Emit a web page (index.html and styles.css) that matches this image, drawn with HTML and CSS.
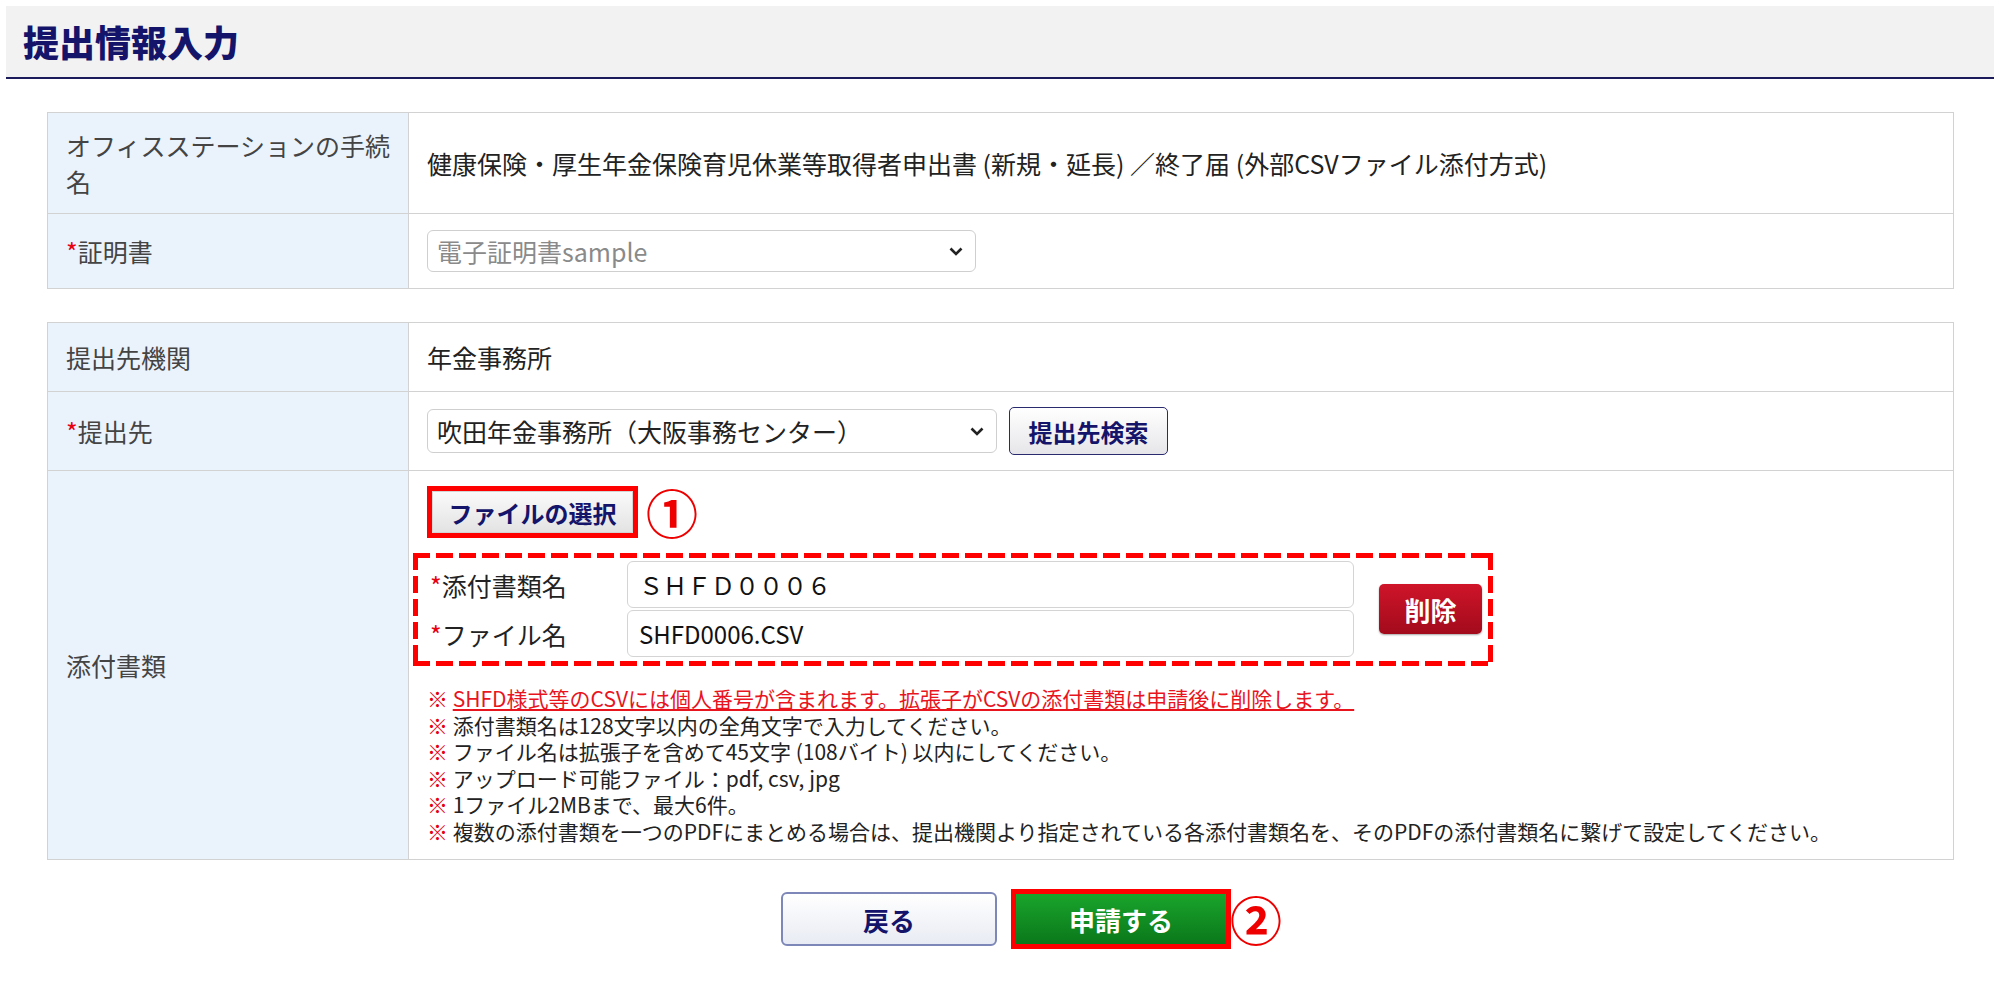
FILE: index.html
```html
<!DOCTYPE html>
<html lang="ja">
<head>
    <meta charset="UTF-8">
    <title>提出情報入力</title>
    <link rel="stylesheet" href="styles.css">
</head>
<body>
    <div class="page">
        <div class="page-head">
            <h1>提出情報入力</h1>
        </div>

        <table class="form-table">
            <colgroup><col class="col-label"><col></colgroup>
            <tr class="row-proc">
                <th>オフィスステーションの手続名</th>
                <td>健康保険・厚生年金保険育児休業等取得者申出書 (新規・延長) ／終了届 (外部CSVファイル添付方式)</td>
            </tr>
            <tr class="row-cert">
                <th><span class="req">*</span>証明書</th>
                <td>
                    <div class="select select-cert is-disabled">
                        <span>電子証明書sample</span>
                        <svg width="14" height="9" viewBox="0 0 14 9"><path d="M1.5 1.5 L7 7 L12.5 1.5" fill="none" stroke="#222" stroke-width="2.6"/></svg>
                    </div>
                </td>
            </tr>
        </table>

        <table class="form-table">
            <colgroup><col class="col-label"><col></colgroup>
            <tr class="row-org">
                <th>提出先機関</th>
                <td>年金事務所</td>
            </tr>
            <tr class="row-dest">
                <th><span class="req">*</span>提出先</th>
                <td>
                    <div class="dest-line">
                        <div class="select select-dest">
                            <span>吹田年金事務所（大阪事務センター）</span>
                            <svg width="14" height="9" viewBox="0 0 14 9"><path d="M1.5 1.5 L7 7 L12.5 1.5" fill="none" stroke="#222" stroke-width="2.6"/></svg>
                        </div>
                        <button class="btn-search">提出先検索</button>
                    </div>
                </td>
            </tr>
            <tr class="row-attach">
                <th>添付書類</th>
                <td>
                    <div class="file-line">
                        <span class="mark-box"><button class="btn-file">ファイルの選択</button></span>
                        <span class="step">①</span>
                    </div>

                    <div class="dash-box">
                        <div class="fields">
                            <div class="field">
                                <label><span class="req">*</span>添付書類名</label>
                                <div class="text-input">ＳＨＦＤ０００６</div>
                            </div>
                            <div class="field">
                                <label><span class="req">*</span>ファイル名</label>
                                <div class="text-input">SHFD0006.CSV</div>
                            </div>
                        </div>
                        <button class="btn-delete">削除</button>
                    </div>

                    <ul class="notes">
                        <li class="warn"><span class="kome">※</span> <u>SHFD様式等のCSVには個人番号が含まれます。拡張子がCSVの添付書類は申請後に削除します。</u></li>
                        <li><span class="kome">※</span> 添付書類名は128文字以内の全角文字で入力してください。</li>
                        <li><span class="kome">※</span> ファイル名は拡張子を含めて45文字 (108バイト) 以内にしてください。</li>
                        <li><span class="kome">※</span> アップロード可能ファイル：pdf, csv, jpg</li>
                        <li><span class="kome">※</span> 1ファイル2MBまで、最大6件。</li>
                        <li><span class="kome">※</span> 複数の添付書類を一つのPDFにまとめる場合は、提出機関より指定されている各添付書類名を、そのPDFの添付書類名に繋げて設定してください。</li>
                    </ul>
                </td>
            </tr>
        </table>

        <div class="actions">
            <button class="btn-back">戻る</button>
            <span class="mark-box mark-apply">
                <button class="btn-apply">申請する</button>
                <span class="step step-apply">②</span>
            </span>
        </div>
    </div>
</body>
</html>
```

FILE: styles.css
```css
body {
    margin: 0;
    background-color: #fff;
    color: #333;
    font-family: "Noto Sans CJK JP", "Noto Sans", sans-serif;
}

button {
    font-family: inherit;
    cursor: pointer;
}

.page {
    padding: 6px 6px 0 6px;
}

.page-head {
    height: 71px;
    background-color: #f2f2f2;
    border-bottom: 2px solid #1b1b5c;
}

.page-head h1 {
    margin: 0;
    padding-left: 17px;
    line-height: 71px;
    font-size: 36px;
    font-weight: 900;
    color: #14146a;
}

.form-table {
    width: calc(100% - 81px);
    margin: 33px 40px 0 41px;
    border-collapse: collapse;
    table-layout: fixed;
    font-size: 25px;
    line-height: 36px;
}

.form-table .col-label {
    width: 361px;
}

.form-table th,
.form-table td {
    border: 1px solid #d2d2d2;
    padding: 15px 18px;
    text-align: left;
    vertical-align: middle;
    font-weight: normal;
}

.form-table th {
    padding-right: 11px;
    background-color: #eaf3fc;
    color: #444;
}

.form-table td {
    color: #222;
}

.row-proc th,
.row-proc td { padding-top: 14px; padding-bottom: 14px; }
.row-org th,
.row-org td { padding-top: 16px; padding-bottom: 16px; }
.row-cert td { padding-top: 16px; padding-bottom: 16px; }

.req {
    color: #e60012;
}

/* selects */
.select {
    display: flex;
    align-items: center;
    justify-content: space-between;
    box-sizing: border-box;
    border: 1px solid #cfcfcf;
    border-radius: 6px;
    padding: 0 12px 0 9px;
    background-color: #fff;
    font-size: 25px;
}

.select-cert {
    width: 549px;
    height: 42px;
}

.select-cert.is-disabled span {
    color: #8a8a8a;
}

.select-dest {
    width: 570px;
    height: 44px;
    color: #222;
}

.dest-line {
    display: flex;
    align-items: center;
    gap: 12px;
}

.btn-search {
    width: 159px;
    height: 48px;
    border: 1px solid #2a2a6e;
    border-radius: 5px;
    background: linear-gradient(#ffffff, #e6e6ea);
    color: #14146a;
    font-size: 24px;
    font-weight: bold;
    padding: 0;
}

/* attachments */
.file-line {
    display: flex;
    align-items: center;
}

.mark-box {
    display: inline-flex;
    border: 5px solid #ff0000;
}

.btn-file {
    width: 201px;
    height: 42px;
    border: 1px solid #d4d4d4;
    background: linear-gradient(#fafafa, #e3e3e3);
    color: #14146a;
    font-size: 24px;
    font-weight: bold;
    padding: 0;
}

.step {
    margin-left: 8px;
    color: #ee0000;
    font-size: 52px;
    line-height: 52px;
    font-weight: bold;
}

.dash-box {
    display: inline-flex;
    align-items: center;
    margin: 15px 0 0 -14px;
    padding: 8px 11px 9px 17px;
    background:
        repeating-linear-gradient(90deg, #ff0000 0 17px, transparent 17px 23px) left top / 100% 5px no-repeat,
        repeating-linear-gradient(90deg, #ff0000 0 17px, transparent 17px 23px) left bottom / 100% 5px no-repeat,
        repeating-linear-gradient(180deg, #ff0000 0 17px, transparent 17px 23px) left top / 5px 100% no-repeat,
        repeating-linear-gradient(180deg, #ff0000 0 17px, transparent 17px 23px) right top / 5px 100% no-repeat;
}

.fields {
    display: flex;
    flex-direction: column;
    gap: 2px;
}

.field {
    display: flex;
    align-items: center;
}

.field label {
    width: 197px;
    font-size: 25px;
    color: #222;
}

.text-input {
    box-sizing: border-box;
    width: 727px;
    height: 47px;
    line-height: 45px;
    border: 1px solid #d4d4d4;
    border-radius: 6px;
    padding-left: 11px;
    font-size: 24px;
    color: #111;
}

.btn-delete {
    width: 103px;
    height: 50px;
    margin-left: 25px;
    border: none;
    border-radius: 5px;
    background: linear-gradient(#cf1429, #a20b1c);
    box-shadow: 0 1px 2px rgba(0, 0, 0, 0.35);
    color: #fff;
    font-size: 26px;
    font-weight: bold;
    padding: 0;
}

.notes {
    list-style: none;
    margin: 19px 0 0 0;
    padding: 0;
    font-size: 21px;
    line-height: 26.5px;
    color: #222;
}

.notes .kome {
    color: #e60012;
    font-weight: bold;
}

.notes .warn u {
    color: #e8141e;
    text-decoration-color: #e8141e;
}

/* bottom buttons */
.actions {
    display: flex;
    justify-content: center;
    align-items: center;
    gap: 14px;
    margin-top: 29px;
    padding-left: 12px;
}

.btn-back {
    width: 216px;
    height: 54px;
    border: 2px solid #7d88b8;
    border-radius: 6px;
    background: linear-gradient(#ffffff, #e8ebf3);
    color: #14146a;
    font-size: 26px;
    font-weight: bold;
    padding: 0;
}

.mark-apply {
    position: relative;
}

.btn-apply {
    width: 210px;
    height: 50px;
    border: none;
    background: linear-gradient(#19a42c, #0b781a);
    color: #fff;
    font-size: 26px;
    font-weight: bold;
    padding: 0;
}

.step-apply {
    position: absolute;
    left: calc(100% + 4px);
    top: 50%;
    transform: translateY(-50%);
    margin-left: 0;
}
```
